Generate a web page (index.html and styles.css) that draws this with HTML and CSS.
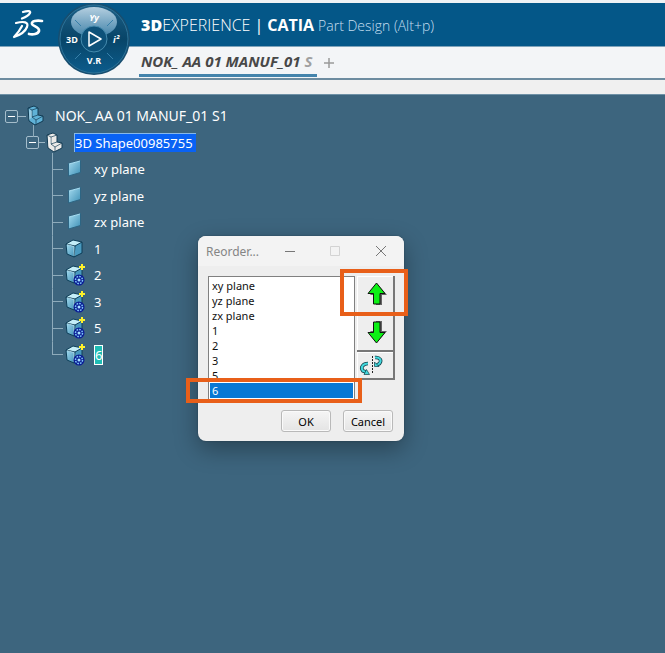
FILE: index.html
```html
<!DOCTYPE html>
<html lang="en">
<head>
<meta charset="utf-8">
<title>3DEXPERIENCE | CATIA Part Design</title>
<link rel="stylesheet" href="styles.css">
</head>
<body>
<svg class="defs" width="0" height="0" aria-hidden="true">
  <defs>
    <linearGradient id="face" x1="0" y1="0" x2="1" y2="1"><stop offset="0" stop-color="#a6dcf0"/><stop offset="1" stop-color="#3d8fb5"/></linearGradient>
    <linearGradient id="disc" x1="0" y1="0" x2="0" y2="1"><stop offset="0" stop-color="#1d5f86"/><stop offset=".5" stop-color="#084568"/><stop offset="1" stop-color="#0c5c8c"/></linearGradient>
    <linearGradient id="north" x1="0" y1="0" x2="0" y2="1"><stop offset="0" stop-color="#b4cfe0"/><stop offset="1" stop-color="#3f81a8"/></linearGradient>
    <symbol id="plane" viewBox="0 0 20 20"><path d="M3.500 4.500L15.500 1.500V13.500L3.500 17z" fill="url(#face)" stroke="#2d6583"/><path d="M4 5L15 2" stroke="#a9dcf0" fill="none"/></symbol>
    <symbol id="cube" viewBox="0 0 20 20"><path d="M1 5L8 1l9 2v11l-8 4-7-3z" fill="#4a9abf"/><path d="M1 5L8 1l9 2-7 4z" fill="#c4eef8"/><path d="M1 5l9 2-1 11-7-3z" fill="url(#face)"/><path d="M1 5L8 1l9 2v11l-8 4-7-3zM1 5l9 2 7-4M10 7L9 18" fill="none" stroke="#0d3c56"/><path d="M2 5.500L9 7.500V17" fill="none" stroke="#d8f5fc" stroke-width=".6"/></symbol>
    <symbol id="body" viewBox="0 0 24 24"><use href="#cube" x="0" y="2" width="20" height="20"/><path d="M17 1v6M14 4h6" stroke="#fff22a" stroke-width="2"/><circle cx="14" cy="17" r="5.500" fill="#0b1d95"/><circle cx="14" cy="17" r="3.500" fill="none" stroke="#7cc5f5" stroke-width="1.500" stroke-dasharray="1.700 1"/><circle cx="14" cy="17" r="1.500" fill="#a5e1ff"/></symbol>
    <symbol id="part" viewBox="0 0 20 22"><path d="M2 3l6-2 4 2v7l5 1v5l-8 4-6-4z" fill="currentColor" stroke="#123b53" stroke-linejoin="round"/><path d="M2 3l4 2 6-2M6 5v7l4 3 7-4M10 15v5M6 12l6-2" fill="none" stroke="#123b53" stroke-width=".7"/><path d="M3 4l3 2v6l-3 3z" fill="#fff" opacity=".35"/></symbol>
    <symbol id="arrow" viewBox="0 0 24 26"><path d="M13 4L22 14h-5v10h-6V14H5z" fill="#666"/><path d="M11.500 2L20 12.500h-5V23H8.500V12.500H3z" fill="#0cf015" stroke="#111"/></symbol>
  </defs>
</svg>

<header class="topbar">
  <svg class="logo" viewBox="0 0 32 30" role="img" aria-label="DS"><g fill="none" stroke="#fff" stroke-linecap="round" stroke-linejoin="round"><path d="M11 2c5-1.500 8-1 7 1-1 2-4 4-8 5.500" stroke-width="2.200"/><path d="M4 13c8-2 13-1 11 4-1.500 4-7 8-13 10 3-3 6-7 8-11" stroke-width="2.200"/><path d="M30 11c-5-1-11 0-10 3 .500 2 8 3 7 7-1 3-6 4-10 3" stroke-width="2.700"/></g></svg>
  <div class="compass">
    <svg viewBox="0 0 74 74" role="img" aria-label="Compass">
      <circle cx="37" cy="37" r="36" fill="#174e70"/><circle cx="37" cy="37" r="34" fill="url(#disc)" stroke="#2b7298"/>
      <ellipse cx="37" cy="20" rx="23" ry="15" fill="url(#north)"/>
      <path d="M18 18l6 6M56 18l-6 6M18 57l6-6M56 57l-6-6" stroke="#367fa9"/>
      <circle cx="37" cy="37" r="13" fill="#0d5179" stroke="#458bae"/>
      <path d="M32 30l12 7-12 7z" fill="none" stroke="#fff" stroke-width="1.500" stroke-linejoin="round"/>
      <g class="compass-text"><text x="37" y="19" font-style="italic">Yy</text><text x="15" y="41">3D</text><text x="59" y="41" font-style="italic">i²</text><text x="37" y="62">V.R</text></g>
    </svg>
  </div>
  <h1 class="brand"><span class="platform"><b>3D</b>EXPERIENCE</span><span class="bar">|</span><b>CATIA</b><span class="app">Part Design (Alt+p)</span></h1>
</header>
<nav class="tabs">
  <a class="tab" href="#doc">NOK_ AA 01 MANUF_01 <span class="fade">S</span></a>
  <button class="add" type="button" aria-label="New tab"><svg viewBox="0 0 10 10"><path d="M5 0v10M0 5h10" stroke="#9a9a9a" stroke-width="1.500"/></svg></button>
</nav>
<div class="strip"></div>

<main class="workspace">
  <ul class="tree">
    <li class="root"><button class="toggle" type="button" aria-label="Collapse"></button><i class="link"></i><svg class="part blue"><use href="#part"/></svg><span>NOK_ AA 01 MANUF_01 S1</span></li>
    <li class="shape"><button class="toggle" type="button" aria-label="Collapse"></button><i class="link"></i><svg class="part white"><use href="#part"/></svg><span class="selected">3D Shape00985755</span></li>
    <li class="leaf"><i class="branch"></i><svg class="icon"><use href="#plane"/></svg><span>xy plane</span></li>
    <li class="leaf"><i class="branch"></i><svg class="icon"><use href="#plane"/></svg><span>yz plane</span></li>
    <li class="leaf"><i class="branch"></i><svg class="icon"><use href="#plane"/></svg><span>zx plane</span></li>
    <li class="leaf"><i class="branch"></i><svg class="icon"><use href="#cube"/></svg><span>1</span></li>
    <li class="leaf"><i class="branch"></i><svg class="icon big"><use href="#body"/></svg><span>2</span></li>
    <li class="leaf"><i class="branch"></i><svg class="icon big"><use href="#body"/></svg><span>3</span></li>
    <li class="leaf"><i class="branch"></i><svg class="icon big"><use href="#body"/></svg><span>5</span></li>
    <li class="leaf last"><i class="branch"></i><svg class="icon big"><use href="#body"/></svg><span class="current">6</span></li>
  </ul>
</main>

<section class="dialog" role="dialog" aria-labelledby="dialog-title">
  <header class="titlebar">
    <h2 id="dialog-title">Reorder...</h2>
    <button type="button" aria-label="Minimize"><svg viewBox="0 0 12 12"><path d="M1 6.500h10" stroke="#777"/></svg></button>
    <button type="button" aria-label="Maximize" disabled><svg viewBox="0 0 12 12"><path d="M1.500 1.500h9v9h-9z" fill="none" stroke="#d3d3d3"/></svg></button>
    <button type="button" aria-label="Close"><svg viewBox="0 0 12 12"><path d="M1 1l10 10M11 1L1 11" stroke="#777"/></svg></button>
  </header>
  <div class="content">
    <select class="list" size="8" aria-label="Features">
      <option>xy plane</option><option>yz plane</option><option>zx plane</option><option>1</option><option>2</option><option>3</option><option>5</option><option selected>6</option>
    </select>
    <div class="tools">
      <button type="button" aria-label="Move up"><svg class="arrow"><use href="#arrow"/></svg></button>
      <button type="button" aria-label="Move down"><svg class="arrow down"><use href="#arrow"/></svg></button>
      <button class="short" type="button" aria-label="Swap"><svg class="swap" viewBox="0 0 24 22"><path d="M13.500 2v18" stroke="#222" stroke-dasharray="2 1"/><g fill="none"><path d="M16 3.500c5-.5 7 3 4.500 6L18 11M9 9.500c-5 0-8 4-5 7.500l3 1" stroke="#123f48" stroke-width="3.600"/><path d="M16 3.500c5-.5 7 3 4.500 6L18 11M9 9.500c-5 0-8 4-5 7.500l3 1" stroke="#42d8dd" stroke-width="2"/></g><path d="M15.500 8v4.500h4.500zM5 20.500h5.500l-3-5z" fill="#42d8dd" stroke="#123f48" stroke-width=".7"/></svg></button>
    </div>
  </div>
  <footer class="actions"><button type="button">OK</button><button type="button">Cancel</button></footer>
  <div class="mark mark-up"></div>
  <div class="mark mark-row"></div>
</section>
</body>
</html>
```
FILE: styles.css
```css
* { box-sizing: border-box; }
body {
  margin: 0;
  min-height: 100vh;
  display: flex;
  flex-direction: column;
  background: #3d657e;
  font-family: "Noto Sans", "Open Sans", sans-serif;
  position: relative;
}
button { padding: 0; border: 0; background: none; font: inherit; }
svg { display: block; flex: none; }
.defs { position: absolute; }

.topbar {
  height: 47px;
  border-top: 3px solid #eef2f5;
  border-bottom: 1px solid #7fa3ba;
  background: #045788;
  display: flex;
  align-items: center;
  padding-left: 12px;
  position: relative;
}
.logo { width: 32px; height: 30px; }
.compass { position: absolute; left: 57px; top: -1px; width: 74px; height: 74px; }
.compass-text { fill: #fff; font: 700 9px "Open Sans", sans-serif; text-anchor: middle; }
.brand {
  margin: 0 0 0 97px;
  display: flex;
  align-items: baseline;
  gap: 4px;
  color: #fff;
  font: 400 16px "Open Sans", sans-serif;
}
.platform { font-weight: 300; }
.platform b { font-weight: 800; }
.app { font-size: 14px; font-weight: 300; color: #c6dff0; }

.tabs {
  height: 33px;
  background: #f3f5f7;
  border-bottom: 2px solid #6d8ca0;
  padding-left: 139px;
  display: flex;
  gap: 7px;
}
.tab {
  height: 30px;
  padding: 0 5px 0 2px;
  border-bottom: 3px solid #4484ac;
  color: #484848;
  font: italic 700 15px/28px "Noto Sans", sans-serif;
  text-decoration: none;
}
.fade { color: #a0a0a0; }
.add svg { width: 10px; height: 10px; }
.strip { height: 15px; background: #f0f0f0; border-bottom: 1px solid #6f91a6; }

.workspace { flex: 1; color: #fff; }
.tree {
  list-style: none;
  margin: 8px 0 0;
  padding: 0;
  height: 265px;
  display: grid;
  grid-template-rows: repeat(10, 1fr);
  font-size: 13px;
  line-height: 18px;
}
.tree li { display: flex; align-items: center; position: relative; }
.tree .root { padding-left: 5px; font-size: 14px; }
.tree .shape { padding-left: 26px; }
.tree .leaf { padding-left: 52px; }
.toggle {
  width: 13px;
  height: 13px;
  border: 1px solid #a5bdcb;
  border-radius: 2px;
  background: linear-gradient(#fff, #fff) center / 7px 1px no-repeat;
}
.link { width: 8px; height: 1px; background: #9db6c5; }
.shape .link { width: 6px; }
.part { width: 20px; height: 22px; margin-right: 9px; }
.blue { color: #5fb1d6; }
.white { color: #eceae8; }
.root::after, .shape::before, .shape::after { content: ""; position: absolute; width: 1px; background: #8eabbb; }
.root::after { left: 33px; top: 22px; bottom: 0; }
.shape::before { left: 33px; top: 0; height: 7px; }
.shape::after { left: 52px; top: 23px; bottom: 0; }
.branch {
  align-self: stretch;
  width: 11px;
  margin-right: 2px;
  background: linear-gradient(#8eabbb, #8eabbb) left / 1px 100% no-repeat, linear-gradient(#8eabbb, #8eabbb) left center / 11px 1px no-repeat;
}
.last .branch { background-size: 1px 50%, 11px 1px; background-position: left top, left center; }
.icon { width: 20px; height: 20px; margin-right: 9px; }
.big { width: 24px; height: 24px; margin-right: 5px; }
.selected { padding-right: 3px; background: #0962f4; border: 1px solid #87b8e8; border-width: 1px 0 0 1px; }
.current { background: #1fbdb5; border: 1px solid #fff; }

.dialog {
  position: absolute;
  left: 198px;
  top: 236px;
  width: 206px;
  border-radius: 8px;
  background: #eee;
  box-shadow: 0 8px 24px #0005, 0 0 2px #0004;
  font-size: 11px;
  color: #111;
}
.titlebar {
  display: grid;
  grid-template-columns: 1fr 45px 45px 47px;
  align-items: center;
  height: 30px;
  padding-left: 8px;
  border-radius: 8px 8px 0 0;
  background: #f3f3f3;
}
.titlebar h2 { margin: 0; font-size: 12px; font-weight: 400; color: #858585; }
.titlebar svg { width: 12px; height: 12px; margin: auto; }
.content { display: flex; gap: 2px; align-items: flex-start; padding: 10px 9px 0 10px; }
.list {
  flex: 1;
  min-width: 0;
  height: 125px;
  padding: 1px 1px 0;
  border: 1px solid #808080;
  border-radius: 0;
  outline: 0;
  background: #fff;
  overflow: hidden;
  font: 11px "Noto Sans", sans-serif;
  color: #111;
}
.list option { padding: 0 2px; height: 15px; min-height: 15px; line-height: 15px; }
.list option:checked { background: linear-gradient(#0878d4, #0878d4); -webkit-text-fill-color: #fff; }
.tools { width: 38px; }
.tools button {
  display: flex;
  align-items: center;
  justify-content: center;
  width: 100%;
  height: 38px;
  padding-left: 4px;
  background: #eee;
  border: solid #777;
  border-width: 0 2px 2px 0;
  box-shadow: inset 1px 1px #fff;
}
.tools .short { height: 28px; justify-content: flex-start; padding-left: 2px; }
.arrow { width: 24px; height: 26px; }
.down { transform: scaleY(-1); }
.swap { width: 24px; height: 22px; }
.actions { display: flex; justify-content: flex-end; gap: 12px; padding: 9px 11px 9px; }
.actions button {
  width: 50px;
  height: 22px;
  border: 1px solid #b9b9b9;
  border-radius: 3px;
  background: linear-gradient(#f5f5f5, #e4e4e4);
  box-shadow: inset 0 0 0 1px #fafafa;
}
.mark { position: absolute; border: 4px solid #e85f19; pointer-events: none; }
.mark-up { left: 142px; top: 33px; width: 68px; height: 47px; }
.mark-row { left: -12px; top: 142px; width: 176px; height: 25px; }
```
